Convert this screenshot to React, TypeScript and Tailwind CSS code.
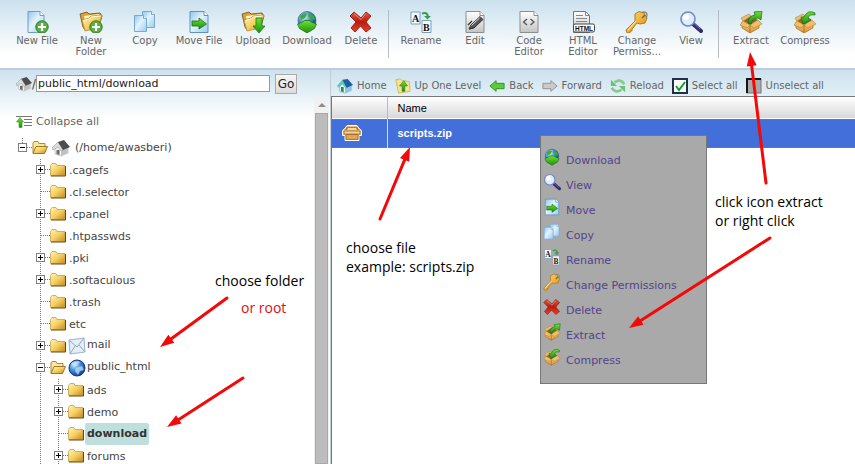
import React from "react";

type IconProps = { className?: string };

const big = "h-[22px] w-6 shrink-0";
const small = "h-4 w-4 shrink-0";

function Defs() {
  return (
    <svg className="absolute h-0 w-0" aria-hidden="true">
      <defs>
        <linearGradient id="page" x1="0" y1="0" x2="1" y2="1">
          <stop offset="0" stopColor="#8fc4ea" />
          <stop offset=".45" stopColor="#e4f3fd" />
          <stop offset="1" stopColor="#9acbef" />
        </linearGradient>
        <linearGradient id="grayPage" x1="0" y1="0" x2="0" y2="1">
          <stop offset="0" stopColor="#ffffff" />
          <stop offset="1" stopColor="#c4c4c4" />
        </linearGradient>
        <linearGradient id="folder" x1="0" y1="0" x2="1" y2="1">
          <stop offset="0" stopColor="#fff3b8" />
          <stop offset=".5" stopColor="#f6cf62" />
          <stop offset="1" stopColor="#c48a1c" />
        </linearGradient>
        <linearGradient id="green" x1="0" y1="0" x2="0" y2="1">
          <stop offset="0" stopColor="#6fe02f" />
          <stop offset="1" stopColor="#1c8f12" />
        </linearGradient>
        <linearGradient id="red" x1="0" y1="0" x2="0" y2="1">
          <stop offset="0" stopColor="#e2573f" />
          <stop offset=".5" stopColor="#b81c10" />
          <stop offset="1" stopColor="#f0402a" />
        </linearGradient>
        <linearGradient id="box" x1="0" y1="0" x2="0" y2="1">
          <stop offset="0" stopColor="#f6cd83" />
          <stop offset="1" stopColor="#d99437" />
        </linearGradient>
        <linearGradient id="gold" x1="0" y1="0" x2="1" y2="1">
          <stop offset="0" stopColor="#ffe06a" />
          <stop offset="1" stopColor="#e08a12" />
        </linearGradient>
        <radialGradient id="globe" cx=".35" cy=".3" r=".8">
          <stop offset="0" stopColor="#d8f1ff" />
          <stop offset=".45" stopColor="#3f8fdc" />
          <stop offset="1" stopColor="#0b2f86" />
        </radialGradient>
      </defs>
    </svg>
  );
}

function Svg({ className, box = "0 0 24 22", children }: IconProps & { box?: string; children: React.ReactNode }) {
  return (
    <svg className={className ?? big} viewBox={box} fill="none" aria-hidden="true">
      {children}
    </svg>
  );
}

const Plus = () => (
  <>
    <circle cx="17" cy="16" r="6.2" fill="#5aae44" stroke="#357a2a" />
    <path d="M17 12v8M13 16h8" stroke="#fff" strokeWidth="2.200" />
  </>
);

const OpenFolder = () => (
  <>
    <path d="M1 3l7-2 2 2 11-1 2 3-3 10-14 4-2-3z" fill="#d9a233" stroke="#6b4d16" strokeWidth=".8" />
    <path d="M5 5l15-2-1 8-12 5z" fill="#fff6cf" />
    <path d="M6 20L3 9l7-2 2-2 11-1-4 13z" fill="url(#folder)" stroke="#b58425" strokeWidth=".7" />
    <path d="M4.500 9.500l6-1.500 2-2 9-1" stroke="#fff9d8" strokeWidth="1" />
  </>
);

const NewFile = () => (
  <Svg>
    <path d="M3 .5h12l4 4v17H3z" fill="url(#page)" stroke="#6d9fc4" />
    <path d="M15 .5v4h4" fill="#fff" stroke="#6d9fc4" />
    <Plus />
  </Svg>
);
const NewFolder = () => (
  <Svg>
    <OpenFolder />
    <Plus />
  </Svg>
);
const CopyIcon = ({ className }: IconProps) => (
  <Svg className={className}>
    <path d="M9.500 .5h9l3 3v13h-12z" fill="url(#page)" stroke="#79a9d0" />
    <path d="M18.500 .5v3h3" fill="#fff" stroke="#79a9d0" />
    <path d="M1.500 4.500h9l3 3v13h-12z" fill="url(#page)" stroke="#79a9d0" />
    <path d="M10.500 4.500v3h3" fill="#fff" stroke="#79a9d0" />
  </Svg>
);
const MoveIcon = ({ className }: IconProps) => (
  <Svg className={className}>
    <path d="M3 .5h14l4 4v17H3z" fill="url(#page)" stroke="#5f93bd" />
    <path d="M17 .5v4h4" fill="#fff" stroke="#5f93bd" />
    <path d="M5 10h7V7l7.500 6-7.500 5v-3H5z" fill="url(#green)" stroke="#14710d" strokeWidth=".8" />
  </Svg>
);
const UploadIcon = () => (
  <Svg>
    <OpenFolder />
    <path d="M15 7h6v8h3l-6 7-6-7h3z" fill="url(#green)" stroke="#1d7a12" strokeWidth=".8" />
  </Svg>
);
const DownloadIcon = ({ className }: IconProps) => (
  <Svg className={className}>
    <circle cx="12" cy="9.500" r="9" fill="url(#globe)" stroke="#1d4f8f" strokeWidth=".6" />
    <path d="M5 5l4-3 3 1-2 4-4 2zM14 2l5 3 1 4-4-1-3-3z" fill="#3faa2c" />
    <path d="M2.500 13l5-2 2-1.500h5l2 1.500 5 2-2 4.500L12 22l-7.500-4.500z" fill="url(#green)" stroke="#17690f" strokeWidth=".7" />
  </Svg>
);
const DeleteIcon = ({ className }: IconProps) => (
  <Svg className={className}>
    <path d="M5 1l7 6 5-6 5 4-5 6 5 6-5 4-5.500-6L6 21l-4-4 5-6-6-6z" fill="url(#red)" stroke="#8f1a10" strokeWidth=".9" />
    <path d="M5 2.500l7 6 5-6" stroke="#f09a88" strokeWidth=".8" />
  </Svg>
);
const RenameIcon = ({ className }: IconProps) => (
  <Svg className={className}>
    <path d="M2 1h9v12H2zM13 9.500h9v12h-9z" fill="#f5faff" stroke="#7f9dbb" />
    <text x="3" y="11" fontFamily="Liberation Serif, serif" fontWeight="700" fontSize="10" fill="#111">A</text>
    <text x="14" y="20" fontFamily="Liberation Serif, serif" fontWeight="700" fontSize="10" fill="#111">B</text>
    <path d="M13 2.500q5-2 6 3" stroke="#3b9a58" strokeWidth="2" />
    <path d="M15 5h7l-3.500 3.500z" fill="#3b9a58" />
  </Svg>
);
const GrayPage = () => (
  <>
    <path d="M3 .5h14l4 4v17H3z" fill="url(#grayPage)" stroke="#8d8d8d" />
    <path d="M17 .5v4h4" fill="#fff" stroke="#8d8d8d" />
  </>
);
const EditIcon = () => (
  <Svg>
    <GrayPage />
    <path d="M6 18l2-4 9-8.500 3 3L11 17z" fill="#555" stroke="#222" strokeWidth=".8" />
    <path d="M8.500 14.500l8-7.500" stroke="#ddd" />
    <path d="M5 14l4-4M6 18l4-1" stroke="#333" strokeWidth="1.200" />
  </Svg>
);
const CodeIcon = () => (
  <Svg>
    <GrayPage />
    <path d="M10 8l-3.500 3 3.500 3M13.500 8l3.500 3-3.500 3" stroke="#555" strokeWidth="1.300" />
  </Svg>
);
const HtmlIcon = () => (
  <Svg>
    <path d="M2.500 .5h12l4 4v17h-16z" fill="url(#grayPage)" stroke="#777" />
    <path d="M14.500 .5v4h4M5 4.500h7M5 7.500h11M5 10.500h11" stroke="#888" />
    <rect x="2.500" y="13" width="21" height="8" rx="1.500" fill="#fff" stroke="#444" />
    <text x="4" y="19.500" fontFamily="Liberation Sans, sans-serif" fontWeight="700" fontSize="6.500" fill="#111">HTML</text>
  </Svg>
);
const KeyIcon = ({ className }: IconProps) => (
  <Svg className={className}>
    <circle cx="19" cy="4" r="3" stroke="#8a8a8a" strokeWidth="1.300" />
    <path d="M10 3l4-2.500 5 1.500 3 5-2 5-5 1-3-1-5 6v2H5v2H2l-1-3 9-9z" fill="url(#gold)" stroke="#a8701a" strokeWidth=".9" />
    <path d="M3 19l8-9" stroke="#fff0a8" />
    <path d="M17 7l3-3" stroke="#666" strokeWidth="1.500" />
  </Svg>
);
const ViewIcon = ({ className }: IconProps) => (
  <Svg className={className}>
    <path d="M14 13l8 7" stroke="#332c75" strokeWidth="4" strokeLinecap="round" />
    <path d="M15 12.500l6 5.500" stroke="#7b77b8" />
    <circle cx="9" cy="8" r="7" fill="#dceeff" stroke="#7587c0" strokeWidth="1.600" />
    <circle cx="7" cy="6" r="3" fill="#fff" />
  </Svg>
);
const Crate = () => (
  <>
    <path d="M3 11l8 3 9-3v6l-9 5-8-5z" fill="url(#box)" stroke="#a36a1f" strokeWidth=".7" />
    <path d="M11 14v8" stroke="#a36a1f" strokeWidth=".8" />
    <path d="M4 10l8-5 7 4-8 5z" fill="#96622a" />
    <path d="M4 10l-3 4 7 3 3-3zM19 9l4 4-8 4-4-3zM4 10L2 7l8-4 2 2z" fill="#efbf70" stroke="#b57b2b" strokeWidth=".6" />
  </>
);
const ExtractIcon = ({ className }: IconProps) => (
  <Svg className={className}>
    <Crate />
    <path d="M9 12q0-7 7-8l-1-3 8-1-1 9-3-2q-6 0-7 6z" fill="url(#green)" stroke="#166b15" strokeWidth=".7" />
  </Svg>
);
const CompressIcon = ({ className }: IconProps) => (
  <Svg className={className}>
    <Crate />
    <path d="M22 2q-7-4-11 4L8 6l2 7 8-4-3-2q1-4 7-3z" fill="url(#green)" stroke="#166b15" strokeWidth=".7" />
  </Svg>
);

const HomeGray = ({ className = small }: IconProps) => (
  <Svg className={className} box="0 0 18 18">
    <path d="M3 9l4-4 6 2 3 1v6l-7 3-6-2z" fill="#f4f4f4" stroke="#aaa" strokeWidth=".6" />
    <path d="M9 10l7-2v6l-7 3z" fill="#c2c2c2" />
    <path d="M0 9l6-6 5 8-2 1-3-4-5 3z" fill="#ddd" stroke="#888" strokeWidth=".5" />
    <path d="M6 3l6-2 6 7-7 3z" fill="#4c4c4c" />
    <path d="M4.500 11h3v5l-3-1z" fill="#6b6b6b" />
  </Svg>
);
const HomeColor = () => (
  <Svg className={small} box="0 0 18 18">
    <path d="M3 8l4-3 9 3v6l-7 3-6-2z" fill="#e9f6ff" stroke="#5c9ac0" strokeWidth=".6" />
    <path d="M9 10l7-2v6l-7 3z" fill="#8fc4e6" />
    <path d="M0 9l6-7 6 9-2 1-4-5-4 4z" fill="#5fc5ba" />
    <path d="M6 2l6-1 6 7-7 3z" fill="#1f5f9c" />
    <path d="M4.500 10h3v6l-3-1z" fill="#24932f" />
  </Svg>
);
const UpLevel = () => (
  <Svg className={small} box="0 0 18 18">
    <path d="M1 2l5-1 2 2 8 1 1 11-13 2z" fill="#f8e38a" stroke="#c9ab3f" strokeWidth=".8" />
    <path d="M8 15V9H5l5-6 4 6h-3v6z" fill="url(#green)" stroke="#23761b" strokeWidth=".6" />
  </Svg>
);
const BackIcon = () => (
  <Svg className={small} box="0 0 18 18">
    <path d="M1 9l7-6v3h9v6H8v3z" fill="#5ccb36" stroke="#2b8f22" />
  </Svg>
);
const ForwardIcon = () => (
  <Svg className={small} box="0 0 18 18">
    <path d="M17 9l-7-6v3H1v6h9v3z" fill="#cacaca" stroke="#8e8e8e" />
  </Svg>
);
const ReloadIcon = () => (
  <Svg className={small} box="0 0 18 18">
    <path d="M16 7q-4-7-11-2M2 11q4 7 11 2" stroke="#83cc8c" strokeWidth="3" />
    <path d="M1 2v7h7zM17 16V9h-7z" fill="#6bc077" />
  </Svg>
);
const CheckedBox = () => (
  <Svg className={small} box="0 0 16 16">
    <rect x="1" y="1" width="14" height="14" fill="#fff" stroke="#203048" strokeWidth="2" />
    <path d="M4 8l3 4 6-8" stroke="#15a02b" strokeWidth="2" />
  </Svg>
);
const EmptyBox = () => (
  <Svg className={small} box="0 0 16 16">
    <rect x="1" y="1" width="14" height="14" fill="#aaa" stroke="#777" strokeWidth="1" />
    <path d="M1 15V1h14" stroke="#151515" strokeWidth="2" />
  </Svg>
);
const BoxFile = () => (
  <svg className="h-4 w-5" viewBox="0 0 20 16" fill="none" aria-hidden="true">
    <path d="M5 .5h10l3 4 1.500 1v5H17v5H3v-5H.5v-5l1.500-1z" fill="#f2bb6e" stroke="#fff" />
    <path d="M5 2h10l2 3H3z" fill="#b9772d" />
    <path d="M6 3h8l1 2H5z" fill="#f6d9a4" />
    <path d="M2 6h16v3H2z" fill="#f9d79b" stroke="#9c6424" strokeWidth=".8" />
    <path d="M4 9.500h12v5H4z" fill="#e0a558" stroke="#9c6424" strokeWidth=".8" />
  </svg>
);

const ClosedFolder = () => (
  <svg className="h-4 w-4 shrink-0" viewBox="0 0 16 16" fill="none" aria-hidden="true">
    <path d="M.5 3.500L2 1.500h4l1 2h8v10H.5z" fill="url(#folder)" stroke="#c6a04a" strokeWidth=".8" />
    <path d="M15.500 4v10H1" stroke="#5b4a1d" />
  </svg>
);
const OpenedFolder = () => (
  <svg className="h-4 w-4 shrink-0" viewBox="0 0 16 16" fill="none" aria-hidden="true">
    <path d="M1 13V3l1-1.500h4l1 2h6V6" fill="#fbe7a0" stroke="#b18a2e" />
    <path d="M1 13.500L4 6.500h11.500l-3 7z" fill="url(#folder)" stroke="#8f6e1f" strokeWidth=".9" />
  </svg>
);
const MailIcon = () => (
  <svg className="h-[18px] w-[18px] shrink-0" viewBox="0 0 18 18" fill="none" aria-hidden="true">
    <path d="M1 3l15-2 1 14-15 2z" fill="#e4eef6" stroke="#9bb4c8" />
    <path d="M1 3l8 7 7-9M2 17l5-8M17 15l-6-7" stroke="#8ea9bf" />
  </svg>
);
const WebIcon = () => (
  <svg className="h-[18px] w-[18px] shrink-0" viewBox="0 0 18 18" fill="none" aria-hidden="true">
    <circle cx="9" cy="9" r="8" fill="url(#globe)" stroke="#12357f" />
    <path d="M3 5q5-4 9-2l-3 3-3 1zM8 9l6-2 2 4-4 1-2 4-3-4z" fill="#c9e4fb" opacity=".7" />
  </svg>
);
const CollapseIcon = () => (
  <svg className="h-3 w-4 shrink-0" viewBox="0 0 16 12" fill="none" aria-hidden="true">
    <path d="M0 .5h16M8 3.500h8M8 6.500h8M8 9.500h8" stroke="#777" />
    <path d="M3 11.500V6H.5l3.500-4.500L7.500 6H6v5.500z" fill="url(#green)" stroke="#3a9a22" strokeWidth=".6" />
  </svg>
);

type Tool = [string, React.FC<IconProps>];
const toolGroups: Tool[][] = [
  [
    ["New File", NewFile],
    ["New Folder", NewFolder],
    ["Copy", CopyIcon],
    ["Move File", MoveIcon],
    ["Upload", UploadIcon],
    ["Download", DownloadIcon],
    ["Delete", DeleteIcon],
  ],
  [
    ["Rename", RenameIcon],
    ["Edit", EditIcon],
    ["Code Editor", CodeIcon],
    ["HTML Editor", HtmlIcon],
    ["Change Permiss...", KeyIcon],
    ["View", ViewIcon],
  ],
  [
    ["Extract", ExtractIcon],
    ["Compress", CompressIcon],
  ],
];

const navItems: Tool[] = [
  ["Home", HomeColor],
  ["Up One Level", UpLevel],
  ["Back", BackIcon],
  ["Forward", ForwardIcon],
  ["Reload", ReloadIcon],
  ["Select all", CheckedBox],
  ["Unselect all", EmptyBox],
];

const menuItems: Tool[] = [
  ["Download", DownloadIcon],
  ["View", ViewIcon],
  ["Move", MoveIcon],
  ["Copy", CopyIcon],
  ["Rename", RenameIcon],
  ["Change Permissions", KeyIcon],
  ["Delete", DeleteIcon],
  ["Extract", ExtractIcon],
  ["Compress", CompressIcon],
];

type Node = { name: string; level: 0 | 1 | 2; toggle?: "+" | "-"; icon?: "home" | "mail" | "web"; selected?: boolean };
const nodes: Node[] = [
  { name: "(/home/awasberi)", level: 0, toggle: "-", icon: "home" },
  { name: ".cagefs", level: 1, toggle: "+" },
  { name: ".cl.selector", level: 1 },
  { name: ".cpanel", level: 1, toggle: "+" },
  { name: ".htpasswds", level: 1 },
  { name: ".pki", level: 1, toggle: "+" },
  { name: ".softaculous", level: 1, toggle: "+" },
  { name: ".trash", level: 1 },
  { name: "etc", level: 1 },
  { name: "mail", level: 1, toggle: "+", icon: "mail" },
  { name: "public_html", level: 1, toggle: "-", icon: "web" },
  { name: "ads", level: 2, toggle: "+" },
  { name: "demo", level: 2, toggle: "+" },
  { name: "download", level: 2, selected: true },
  { name: "forums", level: 2, toggle: "+" },
];

function Guide({ toggle, root, line = true }: { toggle?: "+" | "-"; root?: boolean; line?: boolean }) {
  return (
    <svg className="h-[22px] w-[14px]" viewBox="0 0 14 22" fill="none" aria-hidden="true">
      <path d={root ? "M4.500 1v10" : "M4.500 0v22"} stroke="#777" strokeDasharray="1 1" />
      {line && <path d="M5 10.500h9" stroke="#777" strokeDasharray="1 1" />}
      {toggle && (
        <>
          <rect x=".5" y="6.500" width="8" height="8" fill="#fff" stroke="#808080" />
          <path d={toggle === "+" ? "M2 10.500h5M4.500 8v5" : "M2 10.500h5"} stroke="#000" />
        </>
      )}
    </svg>
  );
}

function TreeRow({ node }: { node: Node }) {
  const raised = node.icon === "mail" || node.icon === "web";
  return (
    <li className="flex h-[22px] items-center">
      {node.level > 0 && <span className="w-[18px]" />}
      {node.level > 1 && (
        <span className="w-[18px]">
          <Guide line={false} />
        </span>
      )}
      {node.toggle ? (
        <button type="button" aria-label={node.toggle === "+" ? "Expand" : "Collapse"}>
          <Guide toggle={node.toggle} root={node.level === 0} />
        </button>
      ) : (
        <Guide />
      )}
      {node.toggle === "-" ? <OpenedFolder /> : <ClosedFolder />}
      {node.icon === "home" && (
        <span className="pl-1">
          <HomeGray className="h-[18px] w-[18px]" />
        </span>
      )}
      {node.icon === "mail" && <span className="pl-0.5"><MailIcon /></span>}
      {node.icon === "web" && <span className="pl-0.5"><WebIcon /></span>}
      <button
        type="button"
        className={
          node.selected
            ? "ml-px h-[22px] rounded-xs bg-[#bfdfdf] px-0.5 text-[11px] leading-[22px] font-bold text-[#333]"
            : raised
              ? "h-[22px] pb-0.5 pl-px text-[11px] leading-5 text-[#444]"
              : node.level === 0
                ? "pl-[5px] text-[11px] leading-[22px] text-[#444]"
                : "h-[22px] pt-0.5 pl-[3px] text-[11px] leading-5 text-[#444]"
        }
      >
        {node.name}
      </button>
    </li>
  );
}

const arrows: [number, number, number, number][] = [
  [380, 219, 410, 147],
  [766, 183, 750, 52],
  [770, 238, 629, 328],
  [227, 298, 160, 347],
  [243, 378, 167, 427],
];

function Arrow({ ends: [x1, y1, x2, y2] }: { ends: [number, number, number, number] }) {
  const length = Math.hypot(x2 - x1, y2 - y1);
  const ux = (x2 - x1) / length;
  const uy = (y2 - y1) / length;
  const bx = x2 - ux * 14;
  const by = y2 - uy * 14;
  return (
    <g>
      <line x1={x1} y1={y1} x2={bx} y2={by} stroke="#f40808" strokeWidth="3" strokeLinecap="round" />
      <polygon points={`${x2},${y2} ${bx - uy * 5},${by + ux * 5} ${bx + uy * 5},${by - ux * 5}`} fill="#f40808" />
    </g>
  );
}

export default function App() {
  return (
    <div className="relative flex h-screen flex-col overflow-hidden bg-white font-['DejaVu_Sans',Verdana,sans-serif] text-[#666]">
      <Defs />
      <header className="flex h-[70px] shrink-0 border-b-2 border-[#bccbdd] bg-linear-to-b from-[#cbe1ee] to-white to-80% px-[10px] pt-[10px]">
        {toolGroups.map((group, i) => (
          <div key={i} className={i ? "flex h-12 border-l border-[#b5bcc4] pl-[5px]" : "flex h-12"}>
            {group.map(([label, Icon]) => (
              <button key={label} type="button" className="flex w-[54px] flex-col items-center pt-px text-[10px] leading-[11px]">
                <Icon />
                <span className="pt-0.5">{label}</span>
              </button>
            ))}
          </div>
        ))}
      </header>

      <div className="flex min-h-0 flex-1">
        <aside className="flex w-[331px] shrink-0 flex-col border-r border-[#c3ccd3] bg-linear-to-b from-[#cde2ee] to-white to-[48px]">
          <form className="flex h-[27px] shrink-0 items-center pl-4" onSubmit={(e) => e.preventDefault()}>
            <HomeGray />
            <label htmlFor="path" className="text-[12px] text-[#444]">/</label>
            <input
              id="path"
              defaultValue="public_html/download"
              className="h-[17px] w-[234px] border border-[#999] bg-white px-px text-[11px] leading-4 text-[#222]"
            />
            <button
              type="submit"
              className="ml-[5px] h-5 w-[22px] border border-[#aaa] bg-linear-to-b from-[#f6f6f6] to-[#dcdcdc] text-[12px] leading-4 text-[#222]"
            >
              Go
            </button>
          </form>
          <div className="flex min-h-0 flex-1">
            <div className="min-w-0 flex-1 overflow-hidden pl-4">
              <button type="button" className="mt-4 flex h-[18px] items-center gap-1 text-[11px]">
                <CollapseIcon />
                Collapse all
              </button>
              <ul className="mt-[6px] pl-0.5">
                {nodes.map((n) => (
                  <TreeRow key={n.name} node={n} />
                ))}
              </ul>
            </div>
            <div className="mr-px flex w-[15px] flex-col items-center bg-[#f1f1f1]">
              <svg className="h-4 w-4 shrink-0" viewBox="0 0 16 16" aria-hidden="true">
                <path d="M8 6l4 4H4z" fill="#8c8c8c" />
              </svg>
              <div className="w-[13px] flex-1 border border-[#a8a8a8] bg-[#bcbcbc]" />
            </div>
          </div>
        </aside>

        <main className="relative flex min-w-0 flex-1 flex-col">
          <nav className="flex h-[26px] shrink-0 items-center gap-2 bg-linear-to-b from-[#cde2ee] to-[#e2eff6] pt-[5px] pl-[6px] text-[10px]">
            {navItems.map(([label, Icon]) => (
              <button key={label} type="button" className="flex items-center gap-1 whitespace-nowrap">
                <Icon />
                {label}
              </button>
            ))}
          </nav>
          <div className="flex-1 border-t border-l border-[#777]">
            <table className="w-full border-collapse text-left font-['Liberation_Sans',Arial,sans-serif] text-[11px]">
              <thead>
                <tr className="h-[22px] border-b border-[#777] bg-linear-to-b from-white to-[#d8d8d8] text-black">
                  <th className="w-[55px] border-r border-[#bbb]" aria-label="Type" />
                  <th className="pl-[10px] font-normal">Name</th>
                </tr>
              </thead>
              <tbody>
                <tr className="h-7 border-b border-[#777] bg-[#426fd9] text-white">
                  <td className="border-r border-[#d5dcf0] pl-[10px]">
                    <BoxFile />
                  </td>
                  <td className="pl-[10px] font-bold">scripts.zip</td>
                </tr>
              </tbody>
            </table>
          </div>

          <div className="absolute top-[65px] left-[209px] h-[249px] w-[167px] border border-[#777] bg-[#a9a9a9] pt-[9px] pl-0.5">
            {menuItems.map(([label, Icon]) => (
              <button key={label} type="button" className="flex h-[25px] items-center text-[11px] whitespace-nowrap text-[#54448c]">
                <Icon className="mr-[5px] mb-0.5 h-[18px] w-[18px] shrink-0" />
                <span className="pt-[7px]">{label}</span>
              </button>
            ))}
          </div>
        </main>
      </div>

      <div className="pointer-events-none absolute inset-0 font-['Open_Sans','Noto_Sans',sans-serif] text-[14px] leading-[19px] text-black">
        <p className="absolute top-[271px] left-[215px]">choose folder</p>
        <p className="absolute top-[298px] left-[241px] text-[#e01010]">or root</p>
        <p className="absolute top-[238px] left-[346px]">choose file<br />example: scripts.zip</p>
        <p className="absolute top-[192px] left-[715px]">click icon extract<br />or right click</p>
        <svg className="absolute top-0 left-0 h-[464px] w-[855px]" viewBox="0 0 855 464" aria-hidden="true">
          {arrows.map((a) => (
            <Arrow key={a.join()} ends={a} />
          ))}
        </svg>
      </div>
    </div>
  );
}
